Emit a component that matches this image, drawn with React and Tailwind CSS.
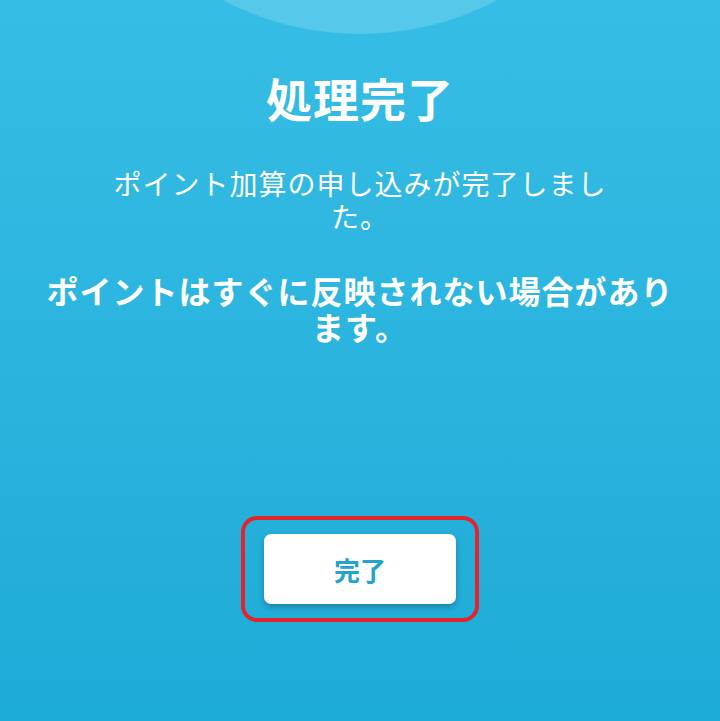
import React from 'react';

const App = () => {
  return (
    <div
      className="relative w-[720px] h-[721px] overflow-hidden bg-gradient-to-b from-[#36bde5] to-[#1dabd7] text-white"
      style={{ fontFamily: '"Noto Sans CJK JP", "Noto Sans", sans-serif' }}
    >
      {/* decorative circle at the top */}
      <div className="absolute left-[65px] top-[-556px] w-[590px] h-[590px] rounded-full bg-[#56c8ea]" />

      <div className="relative flex flex-col items-center">
        <h1 className="mt-[67px] text-[46px] leading-[60px] font-bold tracking-[1px]">処理完了</h1>

        <p className="mt-[40px] w-[500px] text-center text-[28px] leading-[33px] tracking-[1px]">
          ポイント加算の申し込みが完了しました。
        </p>

        <p className="mt-[39px] w-[640px] text-center text-[32px] leading-[36px] font-bold tracking-[1px]">
          ポイントはすぐに反映されない場合があります。
        </p>

        {/* annotated button */}
        <div className="mt-[172px] rounded-[16px] border-[4px] border-[#e3242b] px-[19px] py-[14px]">
          <button className="w-[192px] h-[70px] rounded-[7px] bg-white text-[#24a3cd] text-[26px] font-bold shadow-[0_3px_6px_rgba(0,0,0,0.25)]">
            完了
          </button>
        </div>
      </div>
    </div>
  );
};

export default App;
